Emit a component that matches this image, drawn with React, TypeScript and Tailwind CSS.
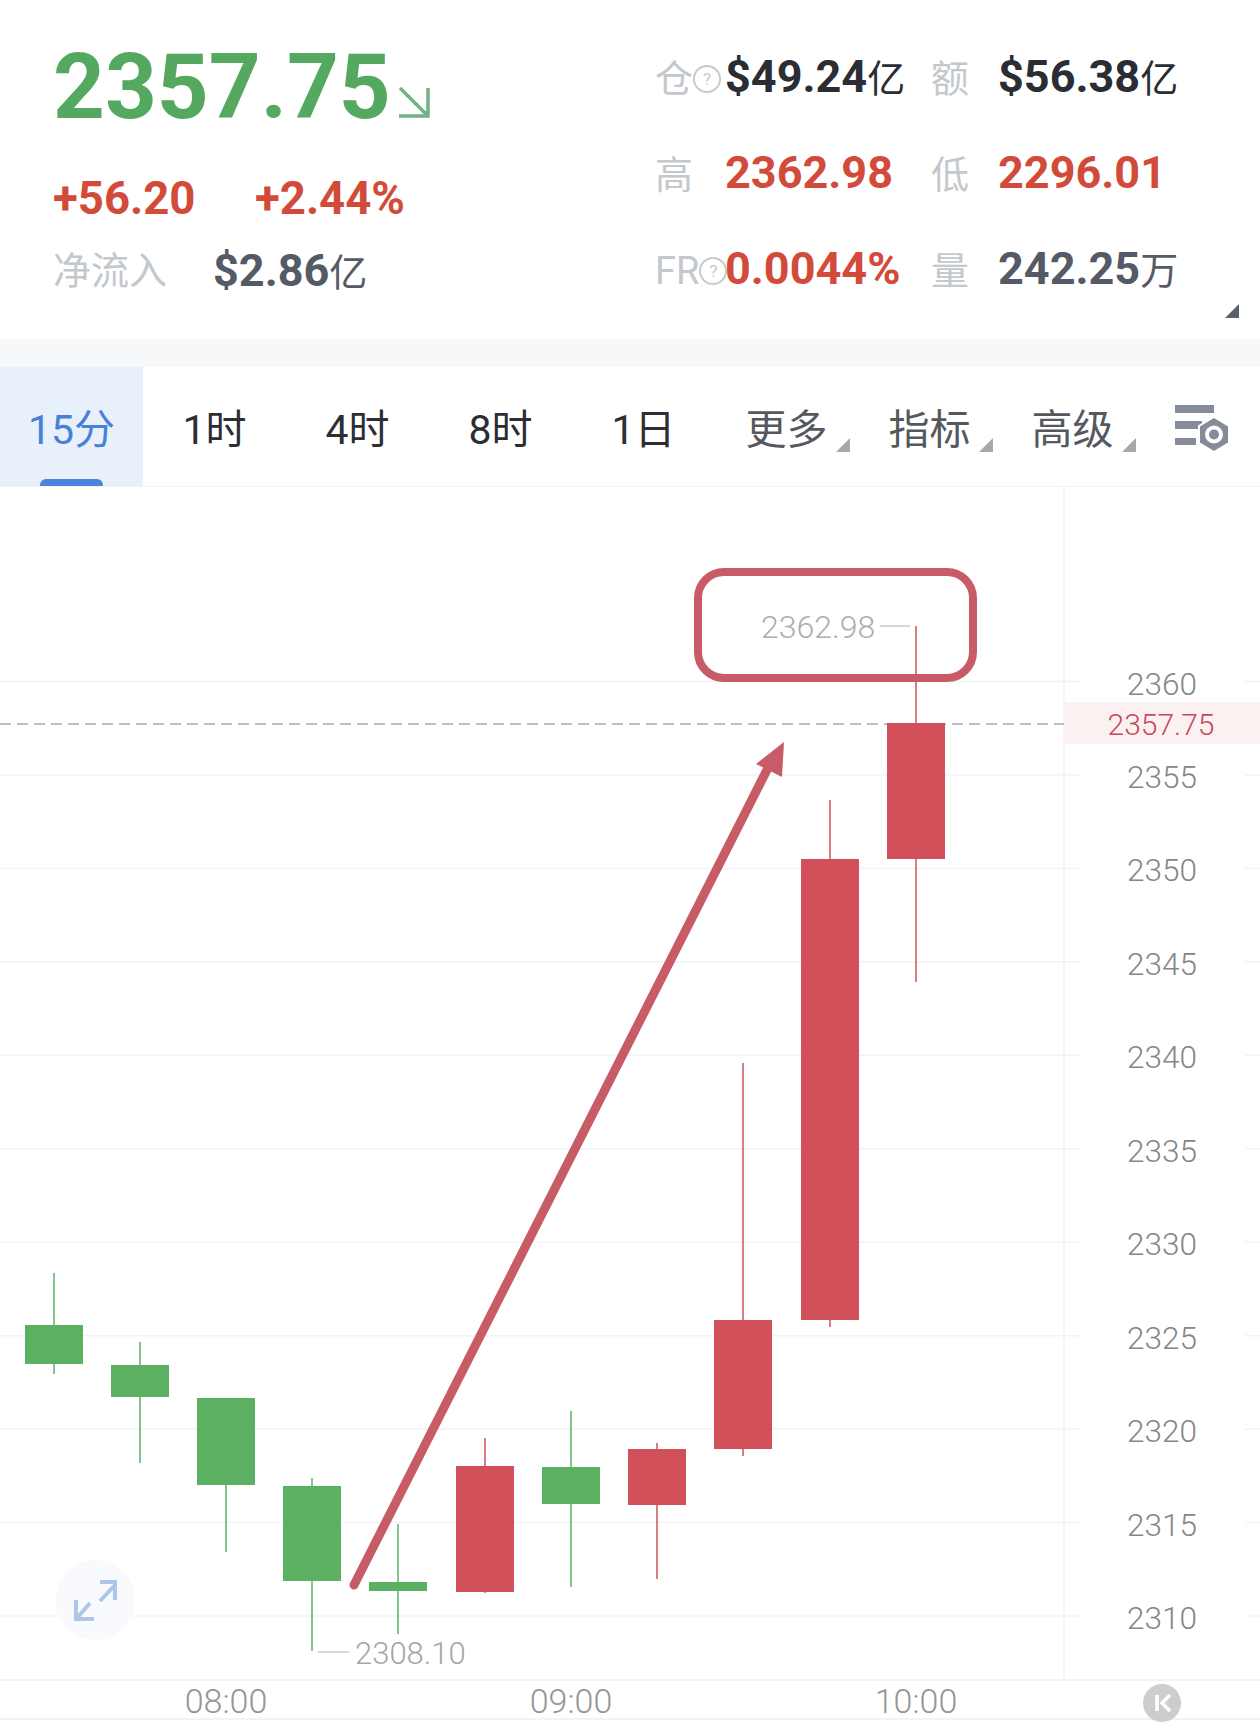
import React from "react";

const gridPrices = [2360, 2355, 2350, 2345, 2340, 2335, 2330, 2325, 2320, 2315, 2310];
const gridY = (i: number) => 681.5 + i * 93.45;

// x = wick centre, wick top/bottom, body top/bottom
const candles = [
  { x: 54, hi: 1273, lo: 1374, top: 1325, bot: 1364, up: false },
  { x: 140, hi: 1342, lo: 1463, top: 1365, bot: 1397, up: false },
  { x: 226, hi: 1398, lo: 1552, top: 1398, bot: 1485, up: false },
  { x: 312, hi: 1478, lo: 1651, top: 1486, bot: 1581, up: false },
  { x: 398, hi: 1524, lo: 1634, top: 1582, bot: 1591, up: false },
  { x: 485, hi: 1438, lo: 1593, top: 1466, bot: 1592, up: true },
  { x: 571, hi: 1411, lo: 1587, top: 1467, bot: 1504, up: false },
  { x: 657, hi: 1443, lo: 1579, top: 1449, bot: 1505, up: true },
  { x: 743, hi: 1063, lo: 1456, top: 1320, bot: 1449, up: true },
  { x: 830, hi: 800, lo: 1327, top: 859, bot: 1320, up: true },
  { x: 916, hi: 626, lo: 982, top: 723, bot: 859, up: true },
];

const tabs = ["1时", "4时", "8时", "1日"];
const menus = ["更多", "指标", "高级"];

function Help() {
  return (
    <span className="flex h-[28px] w-[28px] shrink-0 items-center justify-center rounded-full border-2 border-[#c6cbd0] text-[17px] font-normal leading-none text-[#c6cbd0]">
      ?
    </span>
  );
}

function Unit({ children }: { children: React.ReactNode }) {
  return <span className="text-[38px] font-normal">{children}</span>;
}

function Corner({ className }: { className: string }) {
  return (
    <svg width="14" height="14" viewBox="0 0 14 14" className={className}>
      <path d="M14 0V14H0Z" fill="currentColor" />
    </svg>
  );
}

function StatRow({ label, value, label2, value2 }: { label: React.ReactNode; value: React.ReactNode; label2: string; value2: React.ReactNode }) {
  return (
    <div className="flex h-[60px] items-center">
      <div className="mt-[4px] flex w-[70px] shrink-0 items-center text-[38px] text-[#c3c8cd]">{label}</div>
      <div className="w-[206px] shrink-0 whitespace-nowrap text-[45px] font-bold">{value}</div>
      <div className="mt-[4px] w-[67px] shrink-0 text-[38px] text-[#c3c8cd]">{label2}</div>
      <div className="whitespace-nowrap text-[45px] font-bold">{value2}</div>
    </div>
  );
}

function Chart() {
  return (
    <svg width="1260" height="1237" viewBox="0 487 1260 1237" className="block">
      {/* grid */}
      {gridPrices.map((p, i) => (
        <g key={p}>
          <line x1="0" x2="1080" y1={gridY(i)} y2={gridY(i)} stroke="#f1f3f5" strokeWidth="1.5" />
          <line x1="1245" x2="1260" y1={gridY(i)} y2={gridY(i)} stroke="#f1f3f5" strokeWidth="1.5" />
          <text x="1162" y={gridY(i) + 13} textAnchor="middle" className="fill-[#868686] text-[31.5px] font-light">
            {p}
          </text>
        </g>
      ))}
      <line x1="1064" x2="1064" y1="487" y2="1680" stroke="#f1f3f5" strokeWidth="1.5" />
      <line x1="0" x2="1260" y1="1680" y2="1680" stroke="#f1f3f5" strokeWidth="2" />
      <line x1="0" x2="1260" y1="1719" y2="1719" stroke="#f1f3f5" strokeWidth="2" />

      {/* last price */}
      <rect x="1064" y="702" width="196" height="42" fill="#fbf1f0" />
      <text x="1161" y="735" textAnchor="middle" className="fill-[#c9485c] text-[30px] font-light">
        2357.75
      </text>
      <line x1="0" x2="1064" y1="724" y2="724" stroke="#aaaaaa" strokeWidth="1.5" strokeDasharray="11 6" />

      {/* candles */}
      {candles.map((c) => {
        const color = c.up ? "#d1505a" : "#5bb062";
        return (
          <g key={c.x}>
            <line x1={c.x} x2={c.x} y1={c.hi} y2={c.lo} stroke={color} strokeWidth="1.5" />
            <rect x={c.x - 29} y={c.top} width="58" height={c.bot - c.top} fill={color} />
          </g>
        );
      })}

      {/* high / low marks */}
      <text x="761" y="638" className="fill-[#aeaeae] text-[32px] font-light">
        2362.98
      </text>
      <line x1="880" x2="910" y1="626" y2="626" stroke="#c8c8c8" strokeWidth="1.5" />
      <line x1="318" x2="349" y1="1652" y2="1652" stroke="#c8c8c8" strokeWidth="1.5" />
      <text x="355" y="1664" className="fill-[#a6a6a6] text-[31px] font-light">
        2308.10
      </text>

      {/* annotation */}
      <rect x="698" y="572" width="275" height="106" rx="26" fill="none" stroke="#c85c66" strokeWidth="8" />
      <line x1="354" y1="1585" x2="771" y2="762" stroke="#c85c66" strokeWidth="9" strokeLinecap="round" />
      <path d="M784 742L782 777L756 764Z" fill="#c85c66" />

      {/* time axis */}
      {[
        ["08:00", 226],
        ["09:00", 571],
        ["10:00", 916],
      ].map(([t, x]) => (
        <text key={t} x={x} y="1713" textAnchor="middle" className="fill-[#959595] text-[34px] font-light">
          {t}
        </text>
      ))}

      {/* expand button */}
      <circle cx="95" cy="1600" r="40" fill="#f8fafd" />
      <g fill="none" stroke="#aec6e9" strokeWidth="4">
        <path d="M100 1601L114 1586M100 1582H115V1600" />
        <path d="M90 1603L77 1618M76 1600V1619H94" />
      </g>

      {/* k button */}
      <circle cx="1162" cy="1703" r="19" fill="#cbcdcf" />
      <path d="M1157 1695V1711M1170 1695L1162 1703L1170 1711" fill="none" stroke="#ffffff" strokeWidth="3.5" />
    </svg>
  );
}

export default function App() {
  return (
    <div className="h-[1724px] w-[1260px] overflow-hidden bg-white font-['Roboto','Noto_Sans_CJK_SC',sans-serif]">
      {/* quote header */}
      <div className="relative flex h-[339px]">
        <div className="w-[655px] shrink-0 pl-[53px] pt-[37px]">
          <div className="flex h-[100px] items-center">
            <span className="text-[90.5px] font-bold leading-none text-[#55a85f]">2357.75</span>
            <svg width="34" height="34" viewBox="0 0 34 34" className="ml-[6px] mt-[30px]">
              <path d="M3 3L30 30M31 3V31H2" fill="none" stroke="#72b184" strokeWidth="3.5" />
            </svg>
          </div>
          <div className="mt-[34px] flex h-[56px] items-center text-[45.5px] font-bold text-[#d24b3a]">
            <span className="w-[202px]">+56.20</span>
            <span>+2.44%</span>
          </div>
          <div className="mt-[16px] flex h-[56px] items-center">
            <span className="w-[160px] text-[38px] text-[#c3c8cd]">净流入</span>
            <span className="text-[45px] font-bold text-[#545a66]">
              $2.86<Unit>亿</Unit>
            </span>
          </div>
        </div>
        <div className="flex flex-col gap-[36px] pt-[47px]">
          <StatRow
            label={
              <>
                <span>仓</span>
                <Help />
              </>
            }
            value={
              <span className="text-[#2a2d33]">
                $49.24<Unit>亿</Unit>
              </span>
            }
            label2="额"
            value2={
              <span className="text-[#2a2d33]">
                $56.38<Unit>亿</Unit>
              </span>
            }
          />
          <StatRow
            label="高"
            value={<span className="text-[#d24b3a]">2362.98</span>}
            label2="低"
            value2={<span className="text-[#d24b3a]">2296.01</span>}
          />
          <StatRow
            label={
              <>
                <span className="font-normal">FR</span>
                <Help />
              </>
            }
            value={<span className="text-[#d24b3a]">0.0044%</span>}
            label2="量"
            value2={
              <span className="text-[#545a66]">
                242.25<Unit>万</Unit>
              </span>
            }
          />
        </div>
        <Corner className="absolute left-[1225px] top-[304px] text-[#5a6068]" />
      </div>

      <div className="h-[28px] bg-[#f7f8fa]" />

      {/* period tabs */}
      <div className="flex h-[120px] items-center border-b border-[#f1f3f5] text-[41px] text-[#2c2e33]">
        <div className="relative flex h-full w-[143px] items-center justify-center bg-[#e8f0fb] pt-[8px] text-[#4a7fd6]">
          15分
          <span className="absolute bottom-0 left-[40px] h-[7px] w-[63px] rounded-t-md bg-[#4f82dc]" />
        </div>
        {tabs.map((t) => (
          <div key={t} className="flex h-full w-[143px] items-center justify-center pt-[8px]">
            {t}
          </div>
        ))}
        {menus.map((m) => (
          <div key={m} className="relative flex h-full w-[143px] items-center justify-center pt-[8px] text-[#55585e]">
            {m}
            <Corner className="absolute left-[121px] top-[71px] text-[#a8a8a8]" />
          </div>
        ))}
        <svg width="60" height="60" viewBox="0 0 60 60" className="ml-[28px]">
          <path d="M3 8H42V16H3ZM3 24H30V32H3ZM3 41H24V48H3Z" fill="#858b99" />
          <path d="M42 20L57 29V46L42 55L27 46V29Z" fill="#858b99" stroke="#ffffff" strokeWidth="2" />
          <circle cx="42" cy="37.5" r="9" fill="#ffffff" />
          <circle cx="42" cy="37.5" r="5" fill="#858b99" />
        </svg>
      </div>

      <Chart />
    </div>
  );
}
